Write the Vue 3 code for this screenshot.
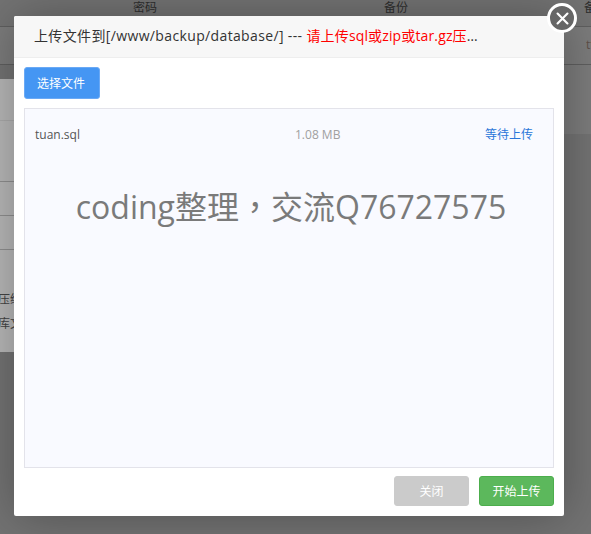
<script setup>
const title = '上传文件到[/www/backup/database/] --- '
const tip = '请上传sql或zip或tar.gz压缩包'
</script>

<template>
  <div class="page">
    <div class="backdrop">
      <div class="thead">
        <span class="th1">密码</span>
        <span class="th2">备份</span>
        <span class="th3">备</span>
      </div>
      <div class="trow"><span class="cell">tt</span></div>
      <div class="lower">
        <div class="panel">
          <div class="line l1"></div>
          <div class="line l2"></div>
          <div class="line l3"></div>
          <div class="line l4"></div>
          <div class="note">
            <p>压缩</p>
            <p>库文</p>
          </div>
        </div>
        <div class="side"></div>
      </div>
    </div>
    <section class="modal">
      <header class="head"><span>{{ title }}</span><span class="tip">{{ tip }}</span></header>
      <div class="content">
        <button class="pick">选择文件</button>
        <div class="box">
          <div class="row">
            <span class="name">tuan.sql</span>
            <span class="size">1.08 MB</span>
            <span class="state">等待上传</span>
          </div>
          <div class="mark">coding整理<span class="comma">，</span>交流Q76727575</div>
        </div>
      </div>
      <footer class="foot">
        <button class="btn off">关闭</button>
        <button class="btn go">开始上传</button>
      </footer>
    </section>
    <button class="close" aria-label="关闭">
      <svg viewBox="0 0 24 24" width="17" height="17"><path d="M5 5 19 19M19 5 5 19" stroke="#fff" stroke-width="3" stroke-linecap="round"/></svg>
    </button>
  </div>
</template>

<style>
html, body { margin: 0; background: #737373; }
</style>
<style scoped>
.page { position: relative; width: 591px; height: 534px; overflow: hidden; font-family: "Open Sans", "Noto Sans CJK SC", sans-serif; background: #737373; }
.backdrop { display: flex; flex-direction: column; height: 100%; }
.thead { height: 26px; flex: none; border-bottom: 1px solid #5f5f5f; background: #737373; color: #2e2e2e; font-size: 12px; line-height: 15px; display: flex; white-space: nowrap; }
.thead span { flex: none; }
.th1 { margin-left: 133px; }
.th2 { margin-left: 227px; }
.th3 { margin-left: 176px; }
.trow { height: 37px; flex: none; border-bottom: 1px solid #5f5f5f; background: #7c7c7c; display: flex; justify-content: flex-end; }
.cell { width: 5px; overflow: hidden; font-size: 12px; line-height: 36px; color: #5f5048; }
.lower { flex: 1; display: flex; justify-content: space-between; }
.panel { width: 14px; height: 273px; margin-top: 14px; background: #b8b8b8; overflow: hidden; position: relative; }
.line { height: 1px; background: #8f8f8f; }
.l1 { margin-top: 41px; background: #aaa; }
.l2 { margin-top: 60px; }
.l3 { margin-top: 33px; }
.l4 { margin-top: 33px; }
.note { font-size: 12px; color: #444; width: 30px; margin: 42px 0 0 -2px; }
.note p { margin: 0 0 8px; line-height: 16px; }
.side { width: 27px; height: 69px; background: #7c7c7c; }
.modal { position: absolute; left: 14px; top: 16px; width: 550px; height: 500px; background: #fff; display: flex; flex-direction: column; border-radius: 2px; box-shadow: 1px 1px 50px rgba(0,0,0,.3); }
.head { height: 42px; flex: none; box-sizing: border-box; border-bottom: 1px solid #eee; background: #f7f7f7; padding: 0 86px 0 20px; line-height: 40px; font-size: 14px; letter-spacing: .36px; white-space: nowrap; overflow: hidden; text-overflow: ellipsis; color: #333; border-radius: 2px 2px 0 0; }
.tip { color: #f00; letter-spacing: .14px; }
.content { flex: 1; padding: 9px 10px 0; display: flex; flex-direction: column; gap: 9px; min-height: 0; }
.pick { align-self: flex-start; width: 76px; height: 32px; padding: 0 2px 0 0; border: 1px solid #6aa9f5; border-radius: 3px; background: #4596f3; color: #fff; font: inherit; font-size: 12px; }
.box { flex: 1; border: 1px solid #e3e3ea; background: #f9faff; padding: 0 20px 0 10px; display: flex; flex-direction: column; }
.row { display: grid; grid-template-columns: 260px 1fr auto; height: 50px; align-items: center; font-size: 12px; color: #555; }
.size { color: #a0a0a0; }
.state { color: #2a76d9; }
.mark { margin-top: 20px; padding-left: 14px; font-size: 32px; line-height: 52px; color: #7a7a7a; text-align: center; white-space: nowrap; }
.comma { font-family: "Noto Sans CJK TC", sans-serif; }
.foot { height: 48px; flex: none; box-sizing: border-box; display: flex; justify-content: flex-end; gap: 10px; padding: 8px 10px 10px; }
.btn { width: 75px; height: 30px; padding: 0; border: 1px solid; border-radius: 3px; color: #fff; font: inherit; font-size: 12px; }
.off { background: #cbcbcb; border-color: #cbcbcb; }
.go { background: #5cb85c; border-color: #4cae4c; }
.close { position: absolute; left: 547px; top: 3px; width: 30px; height: 30px; box-sizing: border-box; padding: 0; border: 3px solid #fff; border-radius: 50%; background: #666; display: flex; align-items: center; justify-content: center; }
</style>
